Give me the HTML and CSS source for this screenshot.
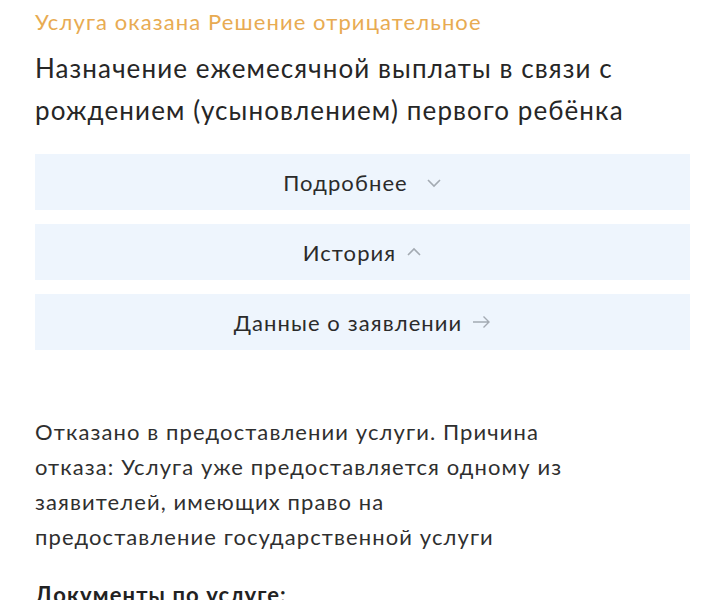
FILE: index.html
```html
<!DOCTYPE html>
<html lang="ru">
<head>
<meta charset="utf-8">
<link rel="stylesheet" href="styles.css">
</head>
<body>
<div class="page">
  <div class="status">Услуга оказана Решение отрицательное</div>
  <h1 class="title">Назначение ежемесячной выплаты в связи с рождением (усыновлением) первого ребёнка</h1>
  <div class="actions">
    <div class="action">Подробнее
      <svg class="ico ico-more" width="16" height="10" viewBox="0 0 16 10"><path d="M2 2 L8 8 L14 2" fill="none" stroke="#a3aab2" stroke-width="1.6"/></svg>
    </div>
    <div class="action">История
      <svg class="ico" width="16" height="10" viewBox="0 0 16 10"><path d="M2 8 L8 2 L14 8" fill="none" stroke="#a3aab2" stroke-width="1.6"/></svg>
    </div>
    <div class="action">Данные о заявлении
      <svg class="ico" width="19" height="14" viewBox="0 0 19 14"><path d="M1 7 H17 M11.5 1.5 L17 7 L11.5 12.5" fill="none" stroke="#a3aab2" stroke-width="1.4"/></svg>
    </div>
  </div>
  <div class="reason">Отказано в предоставлении услуги. Причина отказа: Услуга уже предоставляется одному из заявителей, имеющих право на предоставление государственной услуги</div>
  <div class="docs">Документы по услуге:</div>
</div>
</body>
</html>
```

FILE: styles.css
```css
html, body {
  margin: 0;
  padding: 0;
  background: #ffffff;
}
.page {
  padding: 7px 35px 0 35px;
  font-family: Lato, "Noto Sans", sans-serif;
  color: #2b2b2b;
}
.status {
  font-size: 22px;
  line-height: 30px;
  letter-spacing: 1.1px;
  color: #e8ab52;
}
.title {
  margin: 10px 0 0 0;
  font-size: 26px;
  font-weight: 400;
  line-height: 42px;
  letter-spacing: 1.1px;
  width: 630px;
  color: #262626;
}
.actions {
  margin-top: 23px;
  display: flex;
  flex-direction: column;
  gap: 14px;
}
.action {
  height: 56px;
  background: #eef5fd;
  display: flex;
  align-items: center;
  justify-content: center;
  gap: 10px;
  font-size: 22px;
  letter-spacing: 1.1px;
  color: #2b2b2b;
}
.ico {
  display: block;
}
.ico-more {
  margin-left: 8px;
  margin-top: 2px;
}
.reason {
  margin-top: 64px;
  width: 532px;
  font-size: 22px;
  line-height: 35px;
  letter-spacing: 1.1px;
  color: #2f2f2f;
}
.docs {
  margin-top: 23px;
  font-size: 22px;
  font-weight: 700;
  line-height: 35px;
  letter-spacing: 1.1px;
  color: #222222;
}
```
